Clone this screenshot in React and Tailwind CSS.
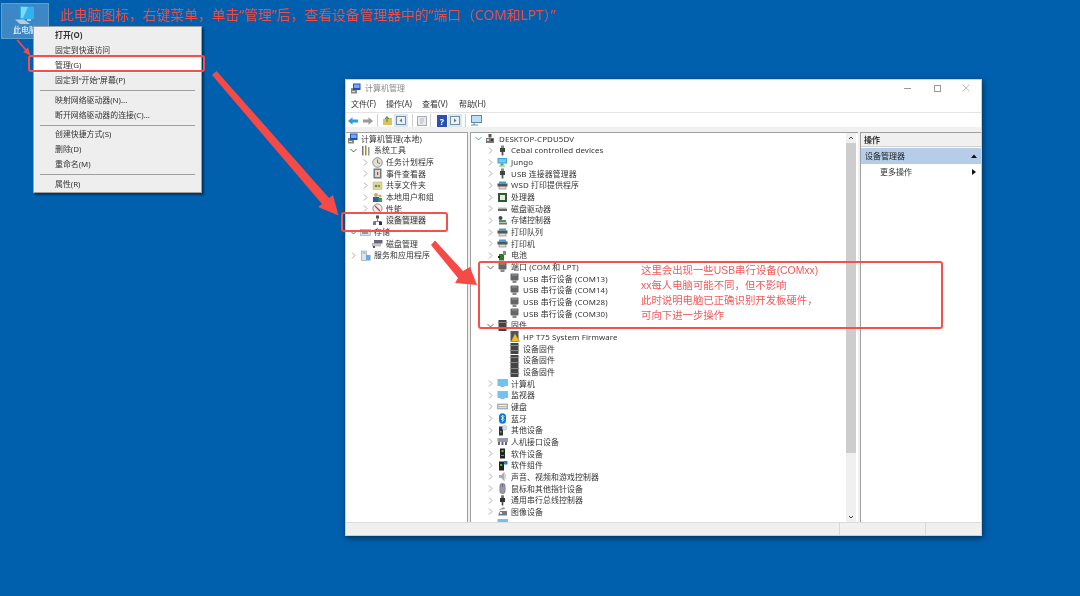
import React from "react";

const FONT = { fontFamily: '"Noto Sans","Noto Sans CJK SC",sans-serif' };

function Icon({ k }) {
  const g = {
    pc: <><rect x="3.5" y="1" width="3" height="3.5" fill="#555"/><rect x="1" y="5" width="8" height="5" fill="#777"/><rect x="2" y="6" width="2" height="2" fill="#ddd"/><rect x="6" y="6" width="2" height="2" fill="#333"/></>,
    plug: <><rect x="4" y="0.5" width="3" height="3" fill="#888"/><rect x="3" y="3" width="5" height="4" fill="#444"/><rect x="4.6" y="7" width="1.8" height="3.5" fill="#555"/></>,
    jungo: <><rect x="0.5" y="1" width="9.5" height="5.5" fill="#3aa0e0"/><rect x="1.5" y="2" width="7.5" height="3.5" fill="#78c8f0"/><rect x="3.5" y="6.5" width="3" height="2" fill="#4aa850"/><rect x="2" y="8.5" width="6" height="1" fill="#5c9"/></>,
    printer: <><rect x="2" y="1.5" width="7" height="2" fill="#3aa0e0"/><rect x="0.5" y="3.5" width="10" height="3" fill="#555"/><rect x="2" y="6.5" width="7" height="2.5" fill="#ddd" stroke="#666" strokeWidth=".5"/></>,
    cpu: <><rect x="1" y="1" width="9" height="9" fill="#2f5a2f"/><rect x="3" y="3" width="5" height="5" fill="#e8e8e0"/></>,
    disk: <><rect x="1" y="5.5" width="9" height="2.5" fill="#666"/><rect x="1" y="4.5" width="9" height="1" fill="#bbb"/></>,
    store: <><circle cx="3.5" cy="3" r="2" fill="#446"/><rect x="2" y="5" width="7" height="2" fill="#4a9a50"/><rect x="2" y="7.5" width="8" height="2" fill="#777"/></>,
    battery: <><rect x="2" y="4" width="5" height="6.5" fill="#2a7a2a"/><rect x="6" y="1" width="3" height="4" fill="#888"/><rect x="1" y="6" width="2" height="2" fill="#222"/></>,
    port: <><rect x="1.5" y="0.5" width="8" height="7" rx="1" fill="#666"/><rect x="3" y="1.5" width="5" height="1" fill="#999"/><rect x="3.5" y="7.5" width="4" height="2.5" fill="#888"/></>,
    chip: <><rect x="1.5" y="0" width="8" height="11" fill="#444"/><rect x="0.8" y="2" width="9.4" height="1" fill="#888"/><rect x="0.8" y="7" width="9.4" height="1" fill="#888"/></>,
    warn: <><rect x="1.5" y="0" width="8" height="10.5" fill="#555"/><path d="M6 2.5 L10.5 10.5 L2 10.5 Z" fill="#f0c020" stroke="#8a6a10" strokeWidth=".4"/></>,
    monitor: <><rect x="0.5" y="1" width="10.5" height="7" fill="#9ab8cc"/><rect x="1.2" y="1.8" width="9" height="5.4" fill="#6ec4f0"/><rect x="3.5" y="8" width="4" height="1.2" fill="#aac"/></>,
    keyboard: <><rect x="0.5" y="3" width="10.5" height="5" fill="#bbb" stroke="#888" strokeWidth=".5"/><rect x="1.5" y="4" width="8" height="1" fill="#eee"/><rect x="1.5" y="6" width="8" height="1" fill="#ddd"/></>,
    bt: <><rect x="2" y="0.3" width="7" height="10.4" rx="3.5" fill="#0a78e0"/><path d="M4 3 L7 6.5 L5.5 8.5 V2 L7 3.7 L4 7" stroke="#fff" strokeWidth=".7" fill="none"/></>,
    other: <><rect x="2" y="1.5" width="4" height="9" fill="#333"/><rect x="3" y="6" width="1.5" height="1.5" fill="#4c4"/><circle cx="7.5" cy="2.8" r="2.4" fill="#cfe0f0" stroke="#89a" strokeWidth=".4"/></>,
    hid: <><rect x="0.5" y="2" width="10.5" height="4" fill="#99a"/><rect x="1" y="6" width="2" height="3" fill="#667"/><rect x="4.5" y="6" width="2" height="3" fill="#667"/><rect x="8" y="6" width="2" height="3" fill="#667"/></>,
    soft: <><rect x="3" y="0.5" width="5" height="10" fill="#222"/><rect x="4.5" y="2" width="2" height="2" fill="#4c4"/><rect x="4" y="7" width="3" height="1" fill="#888"/></>,
    softc: <><rect x="2" y="1.5" width="5" height="9" fill="#222"/><rect x="3.2" y="4" width="2" height="2" fill="#4c4"/><rect x="7" y="1" width="3.5" height="3.5" fill="#2a80d0"/></>,
    audio: <><path d="M2 4 H4.5 L7.5 0.5 V10.5 L4.5 7 H2 Z" fill="#aab"/><path d="M8.5 3 V8" stroke="#ccc" strokeWidth=".8"/></>,
    mouse: <><rect x="2.8" y="0.3" width="5.4" height="10.4" rx="2.7" fill="#99a" stroke="#667" strokeWidth=".5"/><path d="M5.5 1 V4" stroke="#445" strokeWidth=".6"/></>,
    usb: <><rect x="4" y="0.3" width="3" height="3" fill="#777"/><rect x="3" y="3" width="5" height="4" fill="#333"/><rect x="4.7" y="7" width="1.6" height="3.5" fill="#444"/></>,
    cam: <><path d="M1 9.5 L10 9.5 L10 5 L3 5 Z" fill="#778"/><path d="M1 4 L7 1 L8 3 Z" fill="#999"/><rect x="3" y="6" width="2" height="2" fill="#eee"/></>,
    mgmt: <><rect x="1" y="5" width="6" height="5.5" fill="#888"/><rect x="3" y="0.5" width="7.5" height="6.5" fill="#1c50c0"/><rect x="4" y="1.5" width="5.5" height="3.5" fill="#78a8f0"/><rect x="2" y="8" width="3" height="1" fill="#ddd"/></>,
    tools: <><rect x="2" y="1" width="1.5" height="9.5" fill="#777"/><rect x="5" y="0.5" width="1.5" height="10" fill="#b0862a"/><rect x="8" y="2" width="1.5" height="8.5" fill="#999"/></>,
    clock: <><circle cx="5.5" cy="5.5" r="4.8" fill="#e4e0d0" stroke="#777" strokeWidth=".8"/><path d="M5.5 2.5 V5.5 L8 6.5" stroke="#555" strokeWidth=".8" fill="none"/></>,
    event: <><rect x="1.5" y="0.5" width="8" height="10" fill="#6a7a9a"/><rect x="3" y="2" width="5" height="7" fill="#e6d8b0"/><rect x="5" y="4" width="1.2" height="3" fill="#c33"/></>,
    share: <><rect x="1" y="2" width="9" height="7.5" fill="#e6d68a" stroke="#aa9" strokeWidth=".5"/><circle cx="4" cy="6" r="1.3" fill="#48a"/><circle cx="7" cy="6" r="1.3" fill="#6a4"/></>,
    users: <><circle cx="4" cy="3" r="2" fill="#d9a860"/><rect x="1" y="5" width="6" height="5" fill="#2a60b0"/><circle cx="8" cy="4" r="1.6" fill="#d9a860"/><rect x="6.5" y="6" width="3.5" height="4" fill="#3a9a50"/></>,
    perf: <><circle cx="5.5" cy="5.5" r="4.6" fill="#eee" stroke="#777" strokeWidth=".8"/><path d="M3 3 L8 8" stroke="#c33" strokeWidth="1.1"/></>,
    dev: <><rect x="4" y="0.5" width="3" height="3" fill="#555"/><path d="M5.5 3.5 V6 M2 6.5 H9" stroke="#555" strokeWidth=".7"/><rect x="1" y="6.5" width="3" height="3.5" fill="#777"/><rect x="7" y="6.5" width="3" height="3.5" fill="#333"/></>,
    st: <><rect x="0.5" y="2.5" width="10" height="6" fill="#dde" stroke="#99a" strokeWidth=".6"/><rect x="2" y="5" width="6" height="2" fill="#89a"/></>,
    dm: <><rect x="2" y="2" width="8.5" height="3.5" fill="#667"/><rect x="0.5" y="5.5" width="8" height="2.5" fill="#ccc" stroke="#777" strokeWidth=".4"/><rect x="1" y="8" width="2" height="2" fill="#555"/></>,
    svc: <><rect x="1.5" y="1" width="5" height="9.5" fill="#e0e4ea" stroke="#89a" strokeWidth=".6"/><rect x="6" y="5" width="4.5" height="5.5" fill="#6aa8d8"/><rect x="2.5" y="2.5" width="3" height="1" fill="#89a"/></>,
  };
  return <svg width="11" height="11" viewBox="0 0 11 11" className="shrink-0">{g[k]}</svg>;
}

function Chev({ open, blue }) {
  return (
    <svg width="11" height="9" viewBox="0 0 11 9" className="shrink-0">
      {open ? (
        <path d="M1.5 3 L4.5 6 L7.5 3" stroke={blue ? "#4aa8d8" : "#666"} strokeWidth="1" fill="none" />
      ) : (
        <path d="M3 1.5 L6 4.5 L3 7.5" stroke="#aaaaaa" strokeWidth="1" fill="none" />
      )}
    </svg>
  );
}

const PAD = {
  "-1": "pl-[1px]",
  0: "pl-[3px]",
  1: "pl-[15px]",
  2: "pl-[27px]",
};

function Row({ d, c, i, t, sel, blue }) {
  return (
    <div className={`flex h-[11.67px] items-center whitespace-nowrap ${PAD[d]}`}>
      {d !== -1 && (c === "o" ? <Chev open blue={blue} /> : c === "c" ? <Chev /> : <span className="w-[11px] shrink-0" />)}
      <Icon k={i} />
      <span className={`ml-[3px] text-[7.9px] leading-[10px] tracking-[0.12px] text-[#333] ${sel ? "bg-[#e8e8e8]" : ""}`}>{t}</span>
    </div>
  );
}

const LEFT = [
  [-1, "", "mgmt", "计算机管理(本地)"],
  [0, "o", "tools", "系统工具"],
  [1, "c", "clock", "任务计划程序"],
  [1, "c", "event", "事件查看器"],
  [1, "c", "share", "共享文件夹"],
  [1, "c", "users", "本地用户和组"],
  [1, "c", "perf", "性能"],
  [1, "", "dev", "设备管理器", true],
  [0, "o", "st", "存储"],
  [1, "", "dm", "磁盘管理"],
  [0, "c", "svc", "服务和应用程序"],
];

const MID = [
  [0, "o", "pc", "DESKTOP-CPDU5DV"],
  [1, "c", "plug", "Cebal controlled devices"],
  [1, "c", "jungo", "Jungo"],
  [1, "c", "plug", "USB 连接器管理器"],
  [1, "c", "printer", "WSD 打印提供程序"],
  [1, "c", "cpu", "处理器"],
  [1, "c", "disk", "磁盘驱动器"],
  [1, "c", "store", "存储控制器"],
  [1, "c", "printer", "打印队列"],
  [1, "c", "printer", "打印机"],
  [1, "c", "battery", "电池"],
  [1, "o", "port", "端口 (COM 和 LPT)"],
  [2, "", "port", "USB 串行设备 (COM13)"],
  [2, "", "port", "USB 串行设备 (COM14)"],
  [2, "", "port", "USB 串行设备 (COM28)"],
  [2, "", "port", "USB 串行设备 (COM30)"],
  [1, "o", "chip", "固件"],
  [2, "", "warn", "HP T75 System Firmware"],
  [2, "", "chip", "设备固件"],
  [2, "", "chip", "设备固件"],
  [2, "", "chip", "设备固件"],
  [1, "c", "monitor", "计算机"],
  [1, "c", "monitor", "监视器"],
  [1, "c", "keyboard", "键盘"],
  [1, "c", "bt", "蓝牙"],
  [1, "c", "other", "其他设备"],
  [1, "c", "hid", "人机接口设备"],
  [1, "c", "soft", "软件设备"],
  [1, "c", "softc", "软件组件"],
  [1, "c", "audio", "声音、视频和游戏控制器"],
  [1, "c", "mouse", "鼠标和其他指针设备"],
  [1, "c", "usb", "通用串行总线控制器"],
  [1, "c", "cam", "图像设备"],
  [1, "", "monitor", ""],
];

function MenuItem({ t, bold, hi }) {
  return (
    <div className={`flex h-[15px] items-center pl-[21px] text-[7.9px] text-[#333] ${hi ? "bg-white" : ""} ${bold ? "font-bold" : ""}`}>
      {t}
    </div>
  );
}

function Sep({ h }) {
  return (
    <div className={`flex items-center px-[6px] ${h}`}>
      <div className="h-px w-full bg-[#a0a0a0]" />
    </div>
  );
}

function Tool({ children, on }) {
  return (
    <div className={`flex h-[14px] items-center justify-center ${on ? "w-[14px] bg-[#d9e8f5]" : "w-[13px]"}`}>{children}</div>
  );
}

export default function App() {
  return (
    <div className="relative h-[596px] w-[1080px] overflow-hidden bg-[#0060ad] blur-[0.45px]" style={FONT}>
      {/* Desktop icon */}
      <div className="absolute left-[1px] top-[3px] flex h-[36px] w-[48px] flex-col items-center border border-[#5d9fd0] bg-[#3d88c4]">
        <svg width="24" height="21" viewBox="0 0 24 21" className="mt-[1px] shrink-0">
          <path d="M7 1 L21 2 L21 14 L7 14 Z" fill="#2fb2ee" />
          <path d="M8 2 L15 2 L10 13 L8 13 Z" fill="#7fd8f8" />
          <path d="M14 14 H18 V16 H14 Z" fill="#a8cfe6" />
          <path d="M2 14.5 L11 14.5 L17 19 L7 19 Z" fill="#b9cbd8" />
        </svg>
        <span className="mt-[-1px] text-[8px] leading-[10px] text-white">此电脑</span>
      </div>

      {/* Heading */}
      <div className="absolute left-[60px] top-[6px] whitespace-nowrap text-[13.8px] leading-[18px] text-[#ee4c48]">
        此电脑图标，右键菜单，单击“管理”后，查看设备管理器中的“端口（COM和LPT）”
      </div>

      {/* Context menu */}
      <div className="absolute left-[33px] top-[26px] h-[167px] w-[169px] border border-[#a0a0a0] bg-[#eeeeee] pt-[1px] shadow-[2px_2px_2px_rgba(0,0,0,0.45)]">
        <MenuItem t="打开(O)" bold />
        <MenuItem t="固定到快速访问" />
        <MenuItem t="管理(G)" hi />
        <MenuItem t="固定到“开始”屏幕(P)" />
        <Sep h="h-[5px]" />
        <MenuItem t="映射网络驱动器(N)..." />
        <MenuItem t="断开网络驱动器的连接(C)..." />
        <Sep h="h-[4px]" />
        <MenuItem t="创建快捷方式(S)" />
        <MenuItem t="删除(D)" />
        <MenuItem t="重命名(M)" />
        <Sep h="h-[5px]" />
        <MenuItem t="属性(R)" />
      </div>

      {/* Computer Management window */}
      <div className="absolute left-[345px] top-[79px] flex h-[457px] w-[637px] flex-col border border-[#c8d0d8] bg-white shadow-[1px_2px_6px_rgba(0,0,0,0.5)]">
        <div className="flex h-[16px] items-center pl-[4px]">
          <Icon k="mgmt" />
          <span className="ml-[4px] text-[8px] text-[#8a8a8a]">计算机管理</span>
          <div className="ml-auto flex items-center">
            <div className="flex w-[29px] justify-center"><div className="h-px w-[7px] bg-[#999]" /></div>
            <div className="flex w-[30px] justify-center"><div className="h-[7px] w-[7px] border border-[#999]" /></div>
            <div className="flex w-[29px] justify-center pr-[1px]">
              <svg width="8" height="8" viewBox="0 0 8 8"><path d="M.5 .5 L7.5 7.5 M7.5 .5 L.5 7.5" stroke="#aaa" strokeWidth=".8" /></svg>
            </div>
          </div>
        </div>
        <div className="flex h-[17px] items-center border-b border-[#e4e4e4] pl-[5px] text-[8px] text-[#333]">
          <span className="w-[35px]">文件(F)</span>
          <span className="w-[36px]">操作(A)</span>
          <span className="w-[37px]">查看(V)</span>
          <span>帮助(H)</span>
        </div>
        <div className="flex h-[14px] items-center pl-[1px] pt-[1px]">
          <svg width="12" height="10" viewBox="0 0 13 10"><path d="M1 5 L6 1 V3.5 H12 V6.5 H6 V9 Z" fill="#2b9be8" /></svg>
          <svg width="12" height="10" viewBox="0 0 13 10" className="ml-[3px]"><path d="M12 5 L7 1 V3.5 H1 V6.5 H7 V9 Z" fill="#9a9a9a" /></svg>
          <div className="ml-[3px] mr-[3px] h-[13px] w-px bg-[#cfcfcf]" />
          <Tool><svg width="11" height="11" viewBox="0 0 11 11"><path d="M1 4 H4 L5 3 H10 V10 H1 Z" fill="#e0c060" /><path d="M5 7 V2 M3 4 L5 1.5 L7 4" stroke="#3a8a30" fill="none" /></svg></Tool>
          <Tool on><svg width="10" height="9" viewBox="0 0 10 9"><rect x=".5" y=".5" width="9" height="8" fill="#eef" stroke="#7a8a9a" /><path d="M6 2.5 L3.5 4.5 L6 6.5 Z" fill="#3a9a50" /></svg></Tool>
          <div className="ml-[4px] mr-[2px] h-[13px] w-px bg-[#cfcfcf]" />
          <Tool><svg width="10" height="10" viewBox="0 0 10 10"><rect x=".5" y=".5" width="9" height="9" fill="#e8eaf0" stroke="#aab" /><path d="M3 3 H7 M3 5 H7 M3 7 H6" stroke="#bbb" /></svg></Tool>
          <div className="ml-[2px] mr-[4px] h-[13px] w-px bg-[#cfcfcf]" />
          <Tool><svg width="10" height="12" viewBox="0 0 10 12"><rect width="10" height="12" fill="#2a50b0" /><text x="5" y="9.5" fontSize="9" fill="#fff" textAnchor="middle" fontWeight="700">?</text></svg></Tool>
          <Tool on><svg width="10" height="9" viewBox="0 0 10 9"><rect x=".5" y=".5" width="9" height="8" fill="#eef" stroke="#7a8a9a" /><path d="M4 2.5 L6.5 4.5 L4 6.5 Z" fill="#3a9a50" /></svg></Tool>
          <div className="ml-[3px] mr-[3px] h-[13px] w-px bg-[#cfcfcf]" />
          <Tool><svg width="12" height="11" viewBox="0 0 12 11"><rect x="1.5" y=".5" width="10" height="7" fill="#bfe0f2" stroke="#5a8aa8" /><path d="M4 8 V10 M1 10 H8" stroke="#5a8aa8" /></svg></Tool>
        </div>
        <div className="h-[5px] bg-[#f0f0f0]" />

        {/* Panes */}
        <div className="flex min-h-0 flex-1 bg-[#f0f0f0]">
          <div className="w-[122px] overflow-hidden border-r border-t border-[#a0a0a0] bg-white">
            {LEFT.map((r, n) => <Row key={n} d={r[0]} c={r[1]} i={r[2]} t={r[3]} sel={r[4]} />)}
          </div>
          <div className="ml-[2px] flex w-[388px] overflow-hidden border-l border-t border-[#a0a0a0] bg-white">
            <div className="min-w-0 flex-1 overflow-hidden">
              {MID.map((r, n) => <Row key={n} d={r[0]} c={r[1]} i={r[2]} t={r[3]} blue={n === 0} />)}
            </div>
            <div className="mr-[2px] flex w-[10px] flex-col items-center bg-[#f0f0f0]">
              <svg width="10" height="10" viewBox="0 0 10 10" className="shrink-0"><path d="M3 6 L5 4 L7 6" stroke="#444" fill="none" /></svg>
              <div className="h-[310px] w-full bg-[#cdcdcd]" />
              <div className="flex-1" />
              <svg width="10" height="10" viewBox="0 0 10 10" className="shrink-0"><path d="M3 4 L5 6 L7 4" stroke="#444" fill="none" /></svg>
            </div>
          </div>
          <div className="ml-[2px] flex-1 border-l border-t border-[#a0a0a0] bg-white">
            <div className="flex h-[14px] items-center border-b border-[#d0d0d0] bg-[#f0f0f0] pl-[3px] text-[8px] font-bold text-[#333]">操作</div>
            <div className="mt-px flex h-[16px] items-center justify-between bg-[#b5cde8] pl-[4px] pr-[4px] text-[8px] text-[#222]">
              <span>设备管理器</span>
              <svg width="6" height="4" viewBox="0 0 6 4"><path d="M0 4 L3 .5 L6 4 Z" fill="#111" /></svg>
            </div>
            <div className="flex h-[15px] items-center justify-between pl-[19px] pr-[5px] text-[8px] text-[#333]">
              <span>更多操作</span>
              <svg width="4" height="6" viewBox="0 0 4 6"><path d="M0 0 L4 3 L0 6 Z" fill="#111" /></svg>
            </div>
          </div>
        </div>

        {/* Status bar */}
        <div className="flex h-[13px] border-t border-[#dcdcdc] bg-[#f0f0f0]">
          <div className="w-[494px] border-r border-[#d8d8d8]" />
          <div className="w-[86px] border-r border-[#d8d8d8]" />
        </div>
      </div>

      {/* Annotations */}
      <div className="absolute left-[28px] top-[55px] h-[17px] w-[177px] rounded-[3px] border-2 border-[#f4504c]" />
      <div className="absolute left-[341px] top-[212px] h-[20px] w-[107px] rounded-[3px] border-2 border-[#f4504c]" />
      <div className="absolute left-[478px] top-[261px] h-[68px] w-[465px] rounded-[3px] border-2 border-[#f4504c]" />
      <div className="absolute left-[641px] top-[263px] text-[10.4px] leading-[15px] text-[#f05a5a]" style={{ fontFamily: '"Liberation Sans","Noto Sans CJK SC",sans-serif' }}>
        <div>这里会出现一些USB串行设备(COMxx)</div>
        <div>xx每人电脑可能不同，但不影响</div>
        <div>此时说明电脑已正确识别开发板硬件，</div>
        <div>可向下进一步操作</div>
      </div>

      <svg width="1080" height="596" viewBox="0 0 1080 596" className="pointer-events-none absolute left-0 top-0">
        <g fill="#f64a46">
          <path d="M16.5 40.5 L18 39.5 L26 49 L28 47.5 L30.5 55.5 L23 52 L25 50.2 Z" />
          <path d="M212 75 L216.5 71 L329 198 L333 195 L338.5 215.5 L318 207 L322 204 Z" />
          <path d="M431 245 L435 240.5 L463 271 L470 267 L477 285 L455 283 L458 278 Z" />
        </g>
      </svg>
    </div>
  );
}
